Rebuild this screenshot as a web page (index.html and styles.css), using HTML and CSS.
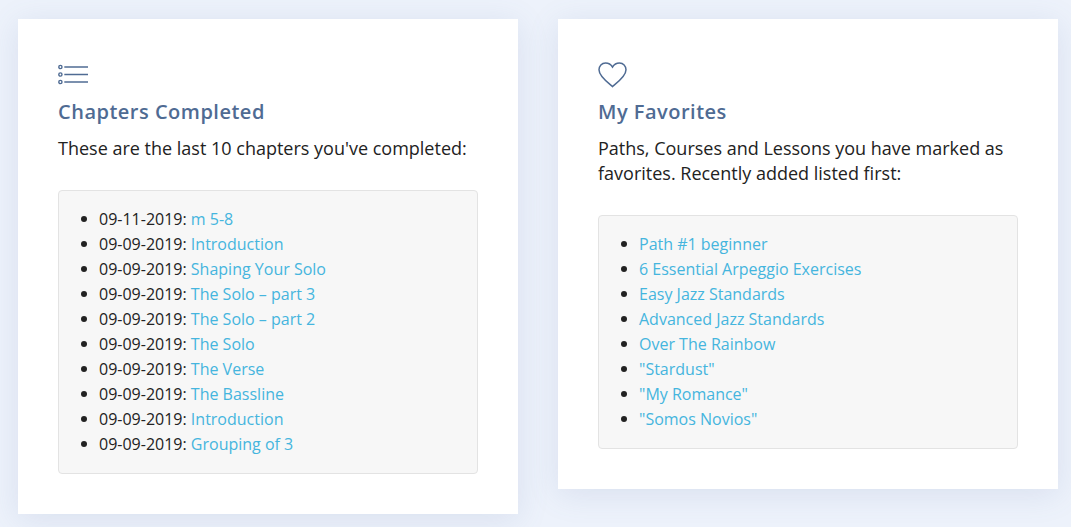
FILE: index.html
```html
<!DOCTYPE html>
<html lang="en">
<head>
<meta charset="utf-8">
<title>Dashboard</title>
<link rel="stylesheet" href="styles.css">
</head>
<body>
<main class="cards">
  <section class="card">
    <svg class="icon" width="32" height="30" viewBox="0 0 32 30" fill="none" stroke="#4f6b93">
      <circle cx="2.400" cy="8" r="1.600" stroke-width="1.400"/><path d="M6.300 8H30" stroke-width="1.500"/>
      <circle cx="2.400" cy="15.500" r="1.600" stroke-width="1.400"/><path d="M6.300 15.500H30" stroke-width="1.500"/>
      <circle cx="2.400" cy="23" r="1.600" stroke-width="1.400"/><path d="M6.300 23H30" stroke-width="1.500"/>
    </svg>
    <h2 class="title">Chapters Completed</h2>
    <p class="intro">These are the last 10 chapters you've completed:</p>
    <div class="well">
      <ul class="list">
        <li>09-11-2019: <a href="#">m 5-8</a></li>
        <li>09-09-2019: <a href="#">Introduction</a></li>
        <li>09-09-2019: <a href="#">Shaping Your Solo</a></li>
        <li>09-09-2019: <a href="#">The Solo – part 3</a></li>
        <li>09-09-2019: <a href="#">The Solo – part 2</a></li>
        <li>09-09-2019: <a href="#">The Solo</a></li>
        <li>09-09-2019: <a href="#">The Verse</a></li>
        <li>09-09-2019: <a href="#">The Bassline</a></li>
        <li>09-09-2019: <a href="#">Introduction</a></li>
        <li>09-09-2019: <a href="#">Grouping of 3</a></li>
      </ul>
    </div>
  </section>
  <section class="card">
    <svg class="icon" width="32" height="30" viewBox="0 0 32 30" fill="none" stroke="#4f6b93" stroke-width="1.500">
      <path d="M14.500 27.600C12.500 25.500 1 18 1 10.800 1 6.800 3.800 4 7.500 4c3 0 5.500 1.500 7 4 1.500-2.500 4-4 7-4 3.700 0 6.500 2.800 6.500 6.800 0 7.200-11.500 14.700-13.500 16.800z"/>
    </svg>
    <h2 class="title">My Favorites</h2>
    <p class="intro">Paths, Courses and Lessons you have marked as favorites. Recently added listed first:</p>
    <div class="well">
      <ul class="list">
        <li><a href="#">Path #1 beginner</a></li>
        <li><a href="#">6 Essential Arpeggio Exercises</a></li>
        <li><a href="#">Easy Jazz Standards</a></li>
        <li><a href="#">Advanced Jazz Standards</a></li>
        <li><a href="#">Over The Rainbow</a></li>
        <li><a href="#">"Stardust"</a></li>
        <li><a href="#">"My Romance"</a></li>
        <li><a href="#">"Somos Novios"</a></li>
      </ul>
    </div>
  </section>
</main>
</body>
</html>
```
FILE: styles.css
```css
html, body {
  margin: 0;
  height: 527px;
  overflow: hidden;
  background: #edf2fb;
}
body {
  font-family: "Open Sans", "Noto Sans", sans-serif;
  font-size: 18px;
  line-height: 25px;
  color: #222;
}
.cards {
  display: flex;
  align-items: flex-start;
  gap: 40px;
  padding: 19px 13px 0 18px;
}
.card {
  flex: 0 0 500px;
  box-sizing: border-box;
  padding: 40px;
  background: #fff;
  box-shadow: 0 5px 30px rgba(90, 115, 160, 0.14);
}
.icon {
  display: block;
}
.title {
  margin: 8px 0 0;
  font-size: 20px;
  line-height: 30px;
  font-weight: 600;
  letter-spacing: 0.5px;
  color: #4f6b93;
}
.intro {
  margin: 9px 0 0;
}
.well {
  margin-top: 29px;
  padding: 16px 19px;
  background: #f7f7f7;
  border: 1px solid #e3e3e3;
  border-radius: 4px;
}
.list {
  margin: 0;
  padding: 0 0 0 21px;
  font-size: 16px;
  list-style: none;
}
.list li {
  position: relative;
}
.list li::before {
  content: "";
  position: absolute;
  left: -18px;
  top: 9px;
  width: 6px;
  height: 6px;
  border-radius: 50%;
  background: #222;
}
a {
  color: #45b5de;
  text-decoration: none;
}
```
